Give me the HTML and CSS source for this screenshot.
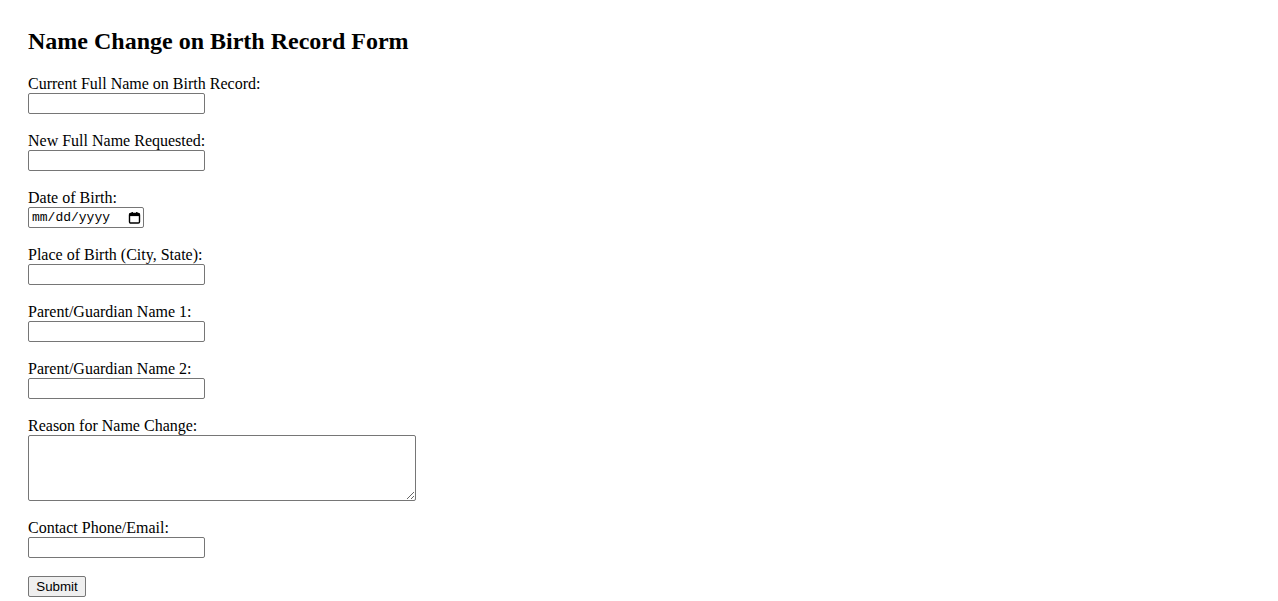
FILE: index.html
```html
<!DOCTYPE html>
<html>
<head>
<meta charset="utf-8">
<title>Name Change on Birth Record Form</title>
<link rel="stylesheet" href="styles.css">
</head>
<body>
<main class="page">
  <h2 class="title">Name Change on Birth Record Form</h2>
  <form class="form">
    <div class="field">
      <label class="label" for="current">Current Full Name on Birth Record:</label>
      <input class="text" type="text" id="current">
    </div>
    <div class="field">
      <label class="label" for="newname">New Full Name Requested:</label>
      <input class="text" type="text" id="newname">
    </div>
    <div class="field">
      <label class="label" for="dob">Date of Birth:</label>
      <div class="date">
        <span class="date-text">mm/dd/yyyy</span>
        <svg class="cal" width="13" height="13" viewBox="0 0 13 13" aria-hidden="true">
          <rect x="1.5" y="2.5" width="10" height="9.5" rx="1.2" fill="none" stroke="#000" stroke-width="1.4"/>
          <rect x="1.5" y="2.5" width="10" height="2.6" fill="#000"/>
          <rect x="3.5" y="1" width="1.4" height="2" fill="#000"/>
          <rect x="8.1" y="1" width="1.4" height="2" fill="#000"/>
        </svg>
      </div>
    </div>
    <div class="field">
      <label class="label" for="pob">Place of Birth (City, State):</label>
      <input class="text" type="text" id="pob">
    </div>
    <div class="field">
      <label class="label" for="p1">Parent/Guardian Name 1:</label>
      <input class="text" type="text" id="p1">
    </div>
    <div class="field">
      <label class="label" for="p2">Parent/Guardian Name 2:</label>
      <input class="text" type="text" id="p2">
    </div>
    <div class="field">
      <label class="label" for="reason">Reason for Name Change:</label>
      <textarea class="area" id="reason"></textarea>
    </div>
    <div class="field">
      <label class="label" for="contact">Contact Phone/Email:</label>
      <input class="text" type="text" id="contact">
    </div>
    <div class="field">
      <button class="submit" type="button">Submit</button>
    </div>
  </form>
</main>
</body>
</html>
```

FILE: styles.css
```css
html, body {
  margin: 0;
  padding: 0;
  background: #fff;
}
body {
  font-family: "Liberation Serif", "Times New Roman", serif;
  font-size: 16px;
  color: #000;
}
.page {
  padding: 27px 28px 0 28px;
}
.title {
  font-size: 24px;
  font-weight: bold;
  margin: 0 0 20px 0;
  line-height: 28px;
}
.form {
  display: flex;
  flex-direction: column;
  gap: 18px;
}
.field {
  display: flex;
  flex-direction: column;
  align-items: flex-start;
}
.label {
  line-height: 18px;
  height: 18px;
}
.text {
  box-sizing: border-box;
  width: 177px;
  height: 21px;
  margin: 0;
  border: 1px solid #767676;
  border-radius: 2px;
  padding: 1px 2px;
  font-family: "Liberation Sans", Arial, sans-serif;
  font-size: 13.33px;
  background: #fff;
}
.date {
  box-sizing: border-box;
  width: 116px;
  height: 21px;
  border: 1px solid #767676;
  border-radius: 2px;
  display: flex;
  align-items: center;
  justify-content: space-between;
  padding: 0 2px 0 3px;
}
.date-text {
  font-family: "Liberation Mono", "Courier New", monospace;
  font-size: 13px;
  color: #000;
}
.cal {
  display: block;
}
.area {
  box-sizing: border-box;
  width: 388px;
  height: 66px;
  margin: 0;
  border: 1px solid #767676;
  border-radius: 2px;
  padding: 2px;
  font-family: "Liberation Mono", monospace;
  font-size: 13.33px;
  resize: both;
}
.submit {
  box-sizing: border-box;
  width: 58px;
  height: 21px;
  margin: 0;
  padding: 1px 6px;
  border: 1px solid #767676;
  border-radius: 2px;
  background: #efefef;
  font-family: "Liberation Sans", Arial, sans-serif;
  font-size: 13.33px;
  color: #000;
}
```
